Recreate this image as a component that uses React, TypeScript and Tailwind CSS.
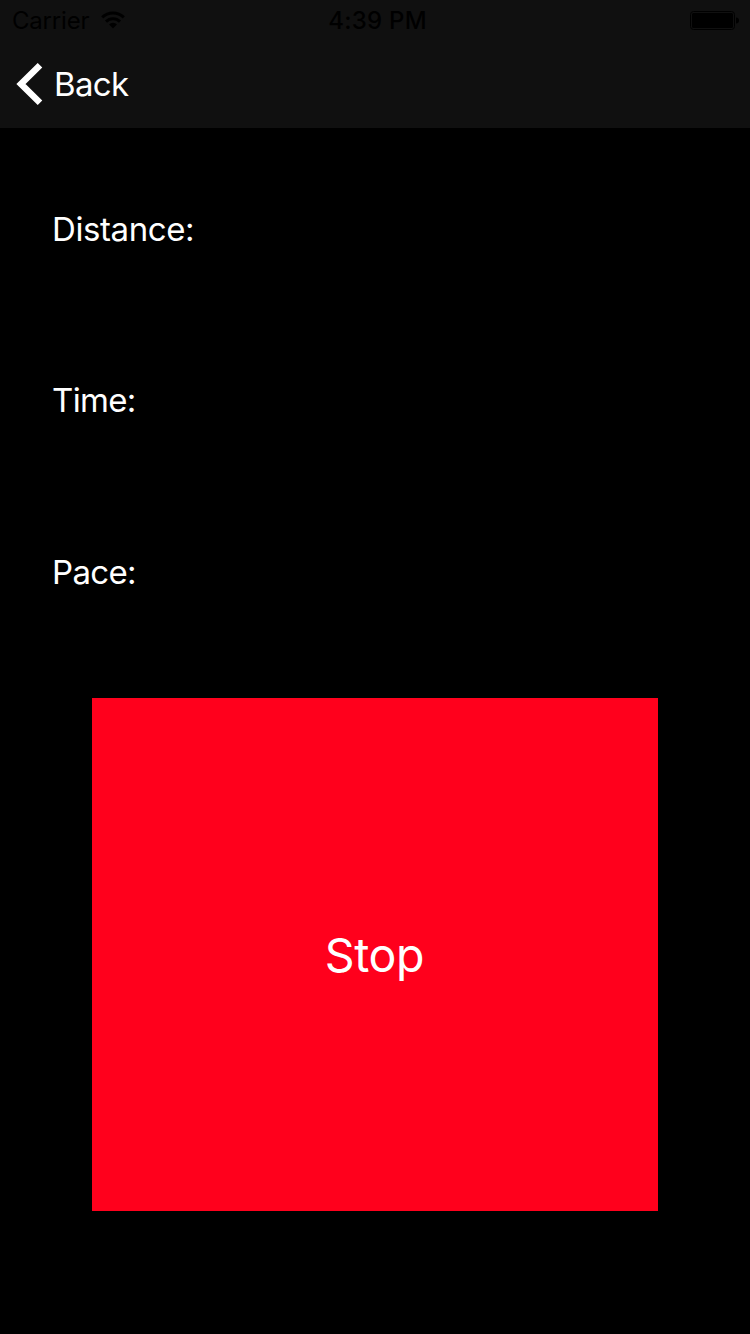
export default function App() {
  return (
    <div className="flex h-[1334px] w-[750px] flex-col bg-black font-['Inter',sans-serif] text-white">
      <header className="flex h-32 flex-col bg-[#101010]">
        <div className="grid h-10 grid-cols-3 items-center text-[24px] leading-[38px] text-black">
          <div className="flex items-center gap-[11.5px] pl-3">
            <span className="pt-0.5 tracking-[-0.2px]">Carrier</span>
            <svg width="24" height="18" viewBox="0 0 24 18" fill="none" stroke="currentColor" strokeWidth="3">
              <path d="M1.2 6.4a15.3 15.3 0 0 1 21.6 0M5 10.6a9.9 9.9 0 0 1 14 0" />
              <path d="M8 13.5a5.7 5.7 0 0 1 8 0L12 17.5z" fill="currentColor" stroke="none" />
            </svg>
          </div>
          <span className="pl-[5px] pt-0.5 text-center font-medium tracking-[0.25px]">4:39 PM</span>
          <svg className="justify-self-end" width="60" height="20" viewBox="0 0 60 20">
            <rect x="0.5" y="1.5" width="44" height="18" rx="3" fill="none" stroke="black" />
            <rect x="2" y="3" width="41" height="15" rx="1.5" />
            <path d="M46 7.5q3 0 3 3t-3 3z" />
          </svg>
        </div>
        <button className="flex h-[88px] items-center pl-4 text-[33px]">
          <svg width="27" height="42" viewBox="0 0 27 42" fill="none" stroke="white" strokeWidth="6.5">
            <path d="M24 2.3 5 21 24 39.7" />
          </svg>
          <span className="pl-[11px] pt-0.5 tracking-[-0.65px]">Back</span>
        </button>
      </header>
      <main className="flex flex-col">
        <div className="flex flex-col gap-[131.25px] pl-[52px] pt-[81px] text-[33px] leading-10 tracking-[-0.4px]">
          <span>Distance:</span>
          <span className="tracking-[-0.65px]">Time:</span>
          <span className="tracking-[-0.65px]">Pace:</span>
        </div>
        <button className="mx-[92px] mt-[106.5px] flex h-[513px] items-center justify-center bg-[#ff001c] pr-px pt-0.5 text-[46.5px] tracking-[-0.4px]">
          Stop
        </button>
      </main>
    </div>
  );
}
